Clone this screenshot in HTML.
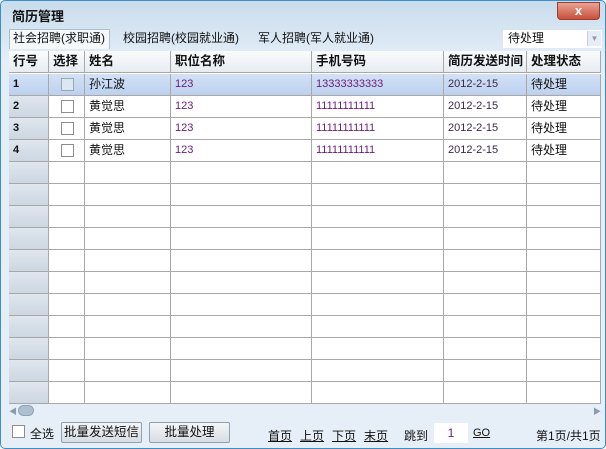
<!DOCTYPE html><html><head><meta charset="utf-8"><style>
*{margin:0;padding:0;box-sizing:border-box}
body{width:606px;height:449px;overflow:hidden;background:#fff;font-family:"Liberation Sans","Noto Sans CJK SC",sans-serif;font-size:12px;color:#111}
.win{position:absolute;left:0;top:0;width:606px;height:449px;border:1px solid #3c8fc6;border-radius:5px;background:linear-gradient(#c9dcec,#e4eef7 60px,#e6eff7);}
.title{position:absolute;left:11px;top:5px;font-weight:bold;font-size:13px;color:#111}
.close{position:absolute;left:556px;top:1px;width:43px;height:18px;background:linear-gradient(#e8a394,#c9503c);border:1px solid #9c3b2e;border-radius:0 0 4px 4px;color:#fff;font-weight:bold;text-align:center;font-size:13px;line-height:16px}
.tab{position:absolute;top:29px;height:18px;line-height:17px;font-size:12px;padding:0 3px}
.tab.a{background:#f4f8fb;border:1px solid #a9bfd2;border-bottom:none;height:20px;top:28px}
.combo{position:absolute;left:502px;top:29px;width:99px;height:18px;background:#fff;line-height:17px;padding-left:5px}
.combo i{position:absolute;right:1px;top:1px;width:14px;height:15px;background:#e6edf4;border-left:1px solid #ccd;font-style:normal;color:#99a;font-size:8px;text-align:center;line-height:15px}
.grid{position:absolute;left:8px;top:50px;width:592px;height:353px;background:#fff;overflow:hidden}
.row{position:absolute;left:0;height:22px;width:592px}
.c{position:absolute;top:0;height:22px;border-right:1px solid #a8a8a8;border-bottom:1px solid #a8a8a8;line-height:21px;padding-left:4px;white-space:nowrap}
.h .c{font-weight:bold;font-size:12.5px;background:linear-gradient(#fafcfd,#e6ecf2)}
.rn{background:linear-gradient(#dfe6ee,#ccd7e2);font-weight:bold;font-size:11px}
.sel .c{background:linear-gradient(#d3e1f6,#bcd0ee)}
.cb{position:absolute;left:12px;top:4px;width:13px;height:13px;border:1px solid #8d8d8d;background:#fff}
.pur{color:#6a1b7a;font-size:11px}
.dt{color:#3a2a4a;font-size:11px}
.sb{position:absolute;left:8px;top:403px;width:592px;height:14px}
.btn{position:absolute;top:421px;height:21px;border:1px solid #8fa0b0;border-radius:2px;background:linear-gradient(#f4f6f8,#d6dde4);text-align:center;line-height:19px;font-size:12.5px}
.lk{position:absolute;top:426px;text-decoration:underline;font-size:12px}
</style></head><body><div class="win">
<div class="title">简历管理</div><div class="close">x</div>
<div class="tab a" style="left:8px;width:101px">社会招聘(求职通)</div>
<div class="tab" style="left:119px">校园招聘(校园就业通)</div>
<div class="tab" style="left:254px">军人招聘(军人就业通)</div>
<div class="combo">待处理<i>▼</i></div>
<div class="grid" id="g"></div>
<div class="sb"><span style="position:absolute;left:0;top:2px;color:#8a9bb0;font-size:8px">◀</span><span style="position:absolute;left:9px;top:1px;width:16px;height:11px;border-radius:6px;background:#aebfd0;border:1px solid #8fa3b7"></span><span style="position:absolute;right:0;top:2px;color:#8a9bb0;font-size:8px">▶</span></div>
<div style="position:absolute;left:11px;top:424px;width:13px;height:13px;border:1px solid #8d8d8d;background:#fff"></div>
<div style="position:absolute;left:29px;top:424px">全选</div>
<div class="btn" style="left:60px;width:81px">批量发送短信</div>
<div class="btn" style="left:148px;width:81px">批量处理</div>
<div class="lk" style="left:267px">首页</div><div class="lk" style="left:299px">上页</div><div class="lk" style="left:331px">下页</div><div class="lk" style="left:363px">末页</div>
<div style="position:absolute;left:403px;top:426px">跳到</div>
<div style="position:absolute;left:433px;top:422px;width:34px;height:20px;background:#fff;text-align:center;line-height:20px;color:#6a1b7a">1</div>
<div class="lk" style="left:472px;font-size:11px">GO</div>
<div style="position:absolute;left:535px;top:426px">第1页/共1页</div>
</div>
<script>
var X=[0,40,76,162,303,435,518,592];
var data=[["1","孙江波","123","13333333333","2012-2-15","待处理"],["2","黄觉思","123","11111111111","2012-2-15","待处理"],["3","黄觉思","123","11111111111","2012-2-15","待处理"],["4","黄觉思","123","11111111111","2012-2-15","待处理"]];
var h='<div class="row h" style="top:0">';var hd=["行号","选择","姓名","职位名称","手机号码","简历发送时间","处理状态"];
for(var i=0;i<7;i++)h+='<div class="c" style="left:'+X[i]+'px;width:'+(X[i+1]-X[i])+'px">'+hd[i]+'</div>';h+='</div>';
for(var r=0;r<15;r++){var d=data[r];h+='<div class="row'+(r==0?' sel':'')+'" style="top:'+(23+r*22)+'px">';
for(var i=0;i<7;i++){var t='',cl='c';
if(i==0){cl+=' rn';t=d?d[0]:'';}
else if(d){
 if(i==1)t='<span class="cb"'+(r==0?' style="background:#dde6f3;border-color:#9aa"':'')+'></span>';
 else{t=d[i-1];if(i==3||i==4)cl+=' pur';if(i==5)cl+=' dt';}
}
h+='<div class="'+cl+'" style="left:'+X[i]+'px;width:'+(X[i+1]-X[i])+'px">'+t+'</div>';}
h+='</div>';}
document.getElementById('g').innerHTML=h;
</script></body></html>
